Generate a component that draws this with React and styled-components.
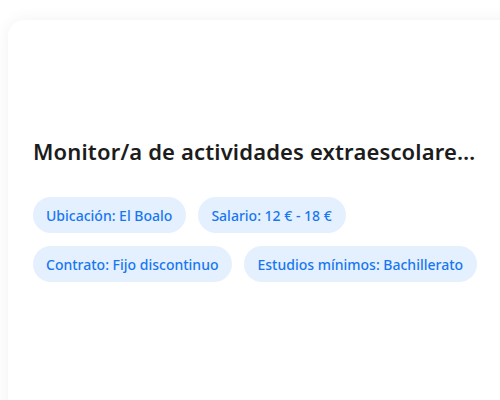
import React from "react";
import styled, { createGlobalStyle } from "styled-components";

const Global = createGlobalStyle`
  html, body { margin: 0; padding: 0; background: #ffffff; overflow: hidden; }
  body { font-family: "Noto Sans", "Open Sans", sans-serif; }
`;

const Page = styled.div`
  padding: 20px 0 0 8px;
  width: 500px;
  height: 400px;
  box-sizing: border-box;
`;

const Card = styled.div`
  width: 540px;
  min-height: 420px;
  box-sizing: border-box;
  background: #ffffff;
  border-radius: 16px;
  box-shadow: 0 0 16px rgba(0, 0, 0, 0.06);
  padding: 116px 0 0 25px;
`;

const Title = styled.h2`
  margin: 0;
  width: 444px;
  font-size: 22px;
  line-height: 30px;
  font-weight: 600;
  letter-spacing: 0.15px;
  color: #1c1c1c;
  white-space: nowrap;
  overflow: hidden;
  text-overflow: ellipsis;
`;

const Tags = styled.div`
  margin-top: 31px;
  width: 460px;
  display: flex;
  flex-wrap: wrap;
  gap: 13px 12px;
`;

const Tag = styled.span`
  display: inline-flex;
  align-items: center;
  height: 36px;
  padding: 0 14px 0 13px;
  border-radius: 18px;
  background: #e5f0fe;
  color: #1677f2;
  font-size: 14px;
  font-weight: 500;
  white-space: nowrap;
`;

const tags = [
  "Ubicación: El Boalo",
  "Salario: 12 € - 18 €",
  "Contrato: Fijo discontinuo",
  "Estudios mínimos: Bachillerato",
];

export default function App() {
  return (
    <>
      <Global />
      <Page>
        <Card>
          <Title>Monitor/a de actividades extraescolares para centros educativos</Title>
          <Tags>
            {tags.map((t) => (
              <Tag key={t}>{t}</Tag>
            ))}
          </Tags>
        </Card>
      </Page>
    </>
  );
}
